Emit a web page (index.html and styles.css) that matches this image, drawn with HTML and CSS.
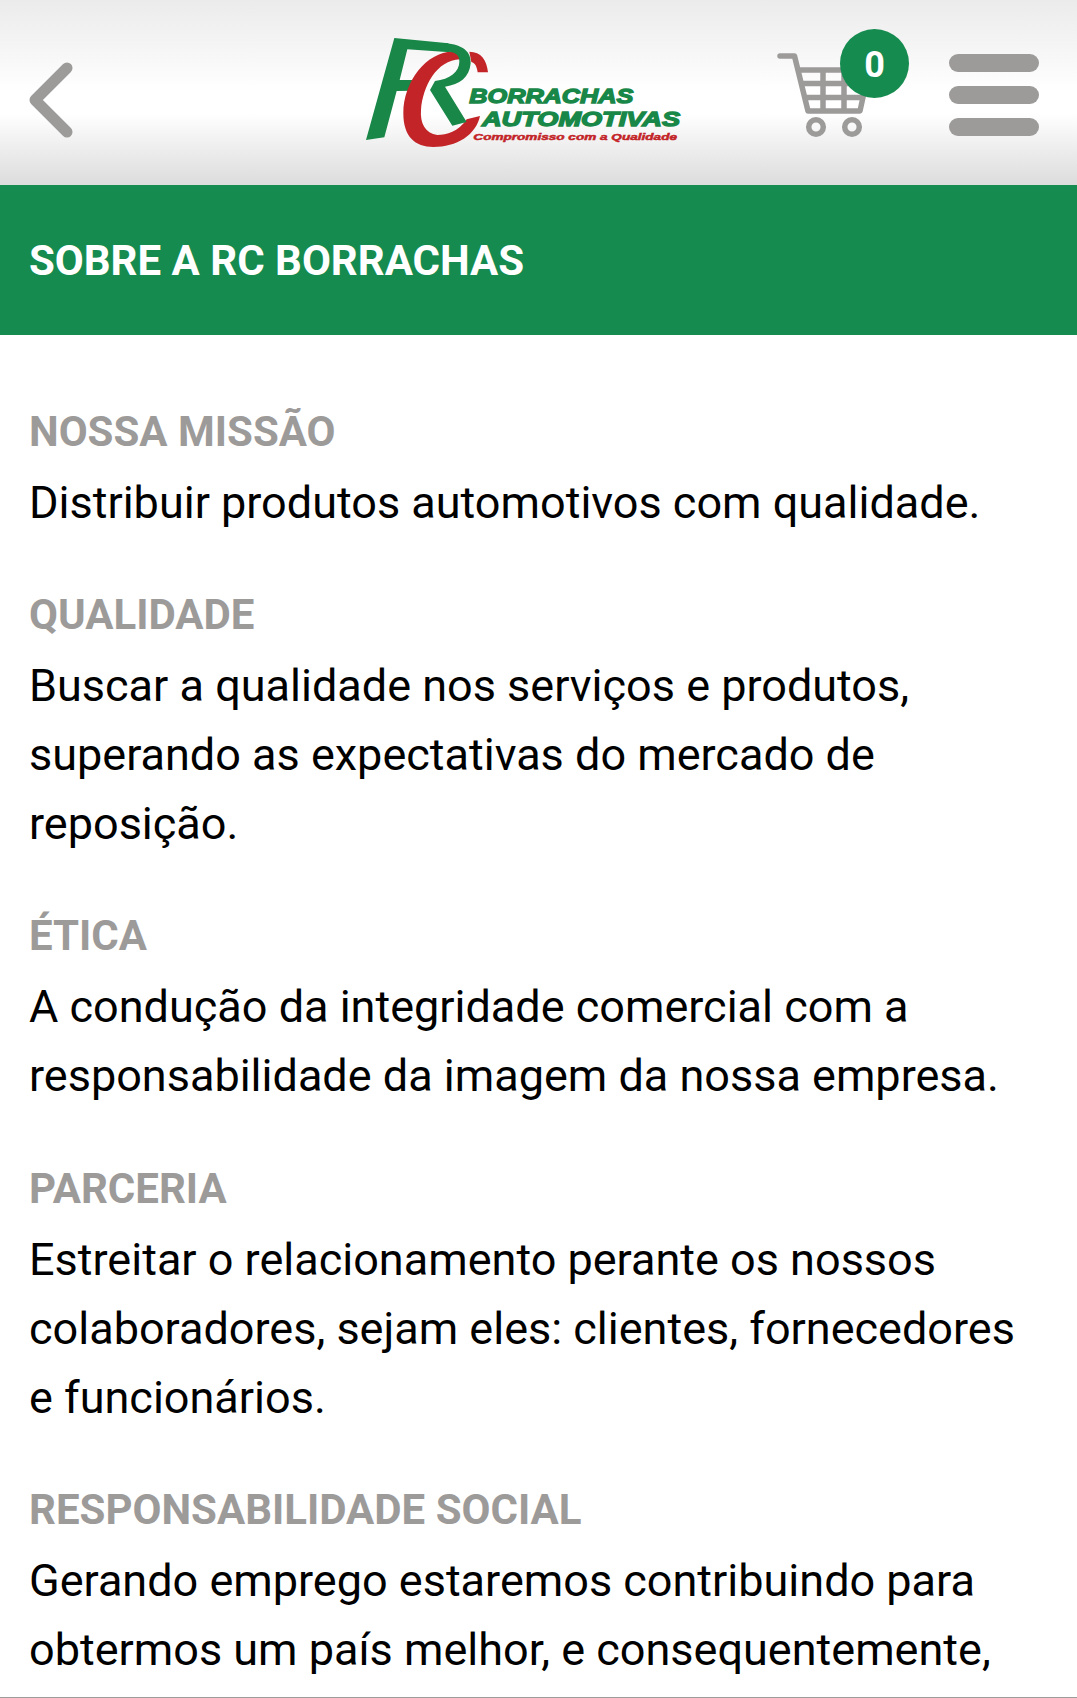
FILE: index.html
```html
<!DOCTYPE html>
<html lang="pt-br">
<head>
    <meta charset="UTF-8">
    <title>RC Borrachas Automotivas - Sobre</title>
    <link rel="stylesheet" href="styles.css">
</head>
<body>
    <header class="topo">
        <a class="voltar" href="#" aria-label="Voltar">
            <svg width="44" height="76" viewBox="0 0 44 76">
                <path d="M38 6 L6 38 L38 70" />
            </svg>
        </a>

        <a class="logo" href="#">
            <svg width="350" height="140" viewBox="0 0 1050 420">
                <!-- simbolo RC -->
                <path class="verde" d="M133 54 L295 70 L300 97 L172 88 L149 180 L200 180 L190 212 L140 213 L103 352 L48 360 Z" />
                <path class="vermelho" d="M330 98 C245 78 160 175 160 280 C160 350 195 381 250 381 C320 381 378 345 390 288 L350 298 C325 335 290 345 262 345 C225 340 210 310 213 270 C218 200 260 120 330 118 Z" />
                <path class="vermelho" d="M358 95 C394 95 410 120 414 157 L383 157 C380 138 376 130 364 126 Z" />
                <path class="verde" d="M285 69 C340 74 364 96 362 130 C358 172 330 194 285 200 L350 306 L307 317 L240 210 L255 183 C300 177 328 155 328 125 C328 105 318 96 285 94 Z" />
                <g class="logo-nome">
                    <text x="358" y="249" textLength="492" lengthAdjust="spacingAndGlyphs">BORRACHAS</text>
                    <text x="396" y="317" textLength="594" lengthAdjust="spacingAndGlyphs">AUTOMOTIVAS</text>
                </g>
                <text class="logo-frase" x="370" y="359" textLength="611" lengthAdjust="spacingAndGlyphs">Compromisso com a Qualidade</text>
            </svg>
        </a>

        <nav class="acoes">
            <a class="carrinho" href="#" aria-label="Carrinho">
                <svg width="94" height="90" viewBox="0 0 94 90">
                    <path d="M4 6 H18.5 L32 61 H84 L93 20 H22.5 M26 33.5 H88 M29 47.5 H86 M47 20 V61 M68 20 V61" />
                    <circle cx="40" cy="77" r="7.3" />
                    <circle cx="76" cy="77" r="7.3" />
                </svg>
                <span class="qtd">0</span>
            </a>
            <a class="menu" href="#" aria-label="Menu">
                <span></span>
                <span></span>
                <span></span>
            </a>
        </nav>
    </header>

    <h1 class="titulo">SOBRE A RC BORRACHAS</h1>

    <main class="conteudo">
        <h2>NOSSA MISSÃO</h2>
        <p>Distribuir produtos automotivos com qualidade.</p>

        <h2>QUALIDADE</h2>
        <p>Buscar a qualidade nos serviços e produtos, superando as expectativas do mercado de reposição.</p>

        <h2>ÉTICA</h2>
        <p>A condução da integridade comercial com a responsabilidade da imagem da nossa empresa.</p>

        <h2>PARCERIA</h2>
        <p>Estreitar o relacionamento perante os nossos colaboradores, sejam eles: clientes, fornecedores e funcionários.</p>

        <h2>RESPONSABILIDADE SOCIAL</h2>
        <p>Gerando emprego estaremos contribuindo para obtermos um país melhor, e consequentemente,</p>
    </main>
</body>
</html>
```
FILE: styles.css
```css
* {
    box-sizing: border-box;
}

body {
    margin: 0;
    height: 1698px;
    overflow: hidden;
    display: flex;
    flex-direction: column;
    background: #fff;
    color: #000;
    font-family: Roboto, sans-serif;
    border-bottom: 1px solid #9d9c9b;
}

/* topo */
.topo {
    flex: none;
    height: 185px;
    padding: 0 38px 0 29px;
    display: flex;
    align-items: flex-start;
    background: linear-gradient(#ebebeb, #fff 50%, #fff 61%, #dcdcdc);
}

.voltar {
    margin-top: 61.5px;
    height: 76px;
}

.voltar path {
    fill: none;
    stroke: #9d9b9a;
    stroke-width: 11;
    stroke-linecap: round;
    stroke-linejoin: round;
}

.logo {
    margin: 20px 0 0 277px;
    height: 140px;
}

.verde,
.logo-nome {
    fill: #188748;
}

.vermelho,
.logo-frase {
    fill: #c32428;
}

.logo text {
    font-family: "Liberation Sans", Arial, sans-serif;
    font-weight: bold;
    font-style: italic;
}

.logo-nome {
    font-size: 61px;
    stroke: #188748;
    stroke-width: 4;
}

.logo-frase {
    font-size: 29px;
    stroke: #c32428;
    stroke-width: 1.5;
}

.acoes {
    display: flex;
    margin-left: auto;
}

.carrinho {
    position: relative;
    margin: 50px 79px 0 0;
    height: 90px;
}

.carrinho svg {
    fill: none;
    stroke: #9d9b9a;
    stroke-width: 5.5;
    stroke-linecap: round;
    stroke-linejoin: round;
}

.qtd {
    position: absolute;
    left: 64px;
    top: -21px;
    width: 69px;
    height: 69px;
    border-radius: 50%;
    background: #158b4f;
    color: #fff;
    font-size: 36px;
    font-weight: bold;
    line-height: 72px;
    text-align: center;
}

.menu {
    display: flex;
    flex-direction: column;
    gap: 14px;
    margin-top: 54px;
}

.menu span {
    width: 90px;
    height: 18px;
    border-radius: 9px;
    background: #9d9b9a;
}

/* faixa do titulo */
.titulo {
    flex: none;
    margin: 0;
    height: 150px;
    padding-left: 29px;
    background: #158b4f;
    color: #fff;
    font-size: 42px;
    line-height: 152px;
}

.conteudo {
    padding: 62px 38px 0 29px;
}

.conteudo h2 {
    margin: 0 0 2px;
    color: #9d9b9a;
    font-size: 42px;
    line-height: 69px;
}

.conteudo p {
    margin: 0 0 43.2px;
    font-size: 45px;
    line-height: 69px;
}
```
